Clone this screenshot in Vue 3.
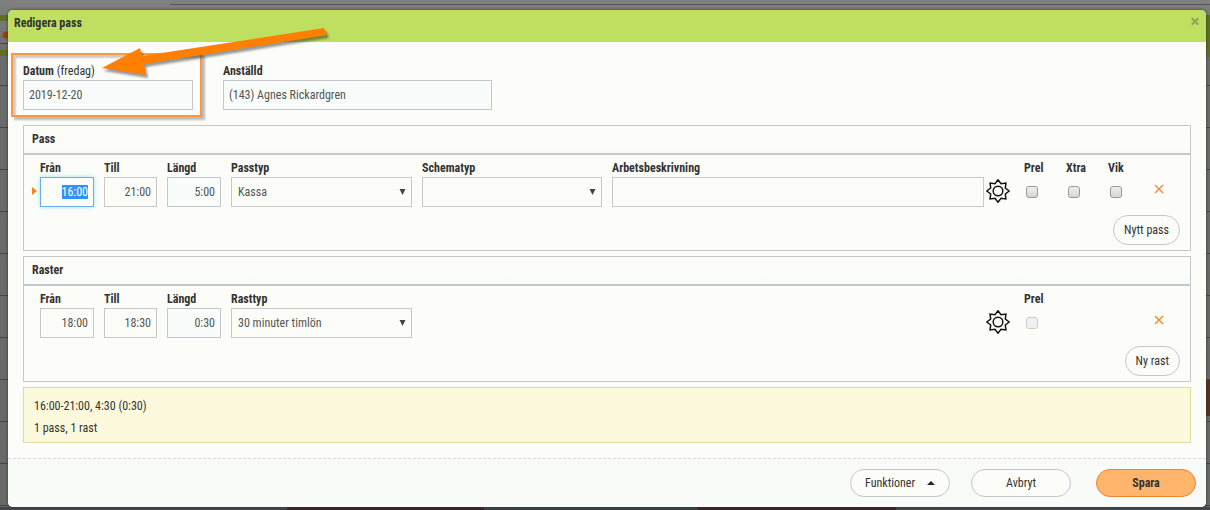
<script setup>
import { onMounted, reactive, ref } from 'vue'

const firstTime = ref(null)
const form = reactive({
  date: '2019-12-20',
  employee: '(143) Agnes Rickardgren',
  shift: { from: '16:00', to: '21:00', length: '5:00', type: 'Kassa', schema: '', note: '' },
  pause: { from: '18:00', to: '18:30', length: '0:30', type: '30 minuter timlön' }
})
const flags = reactive([
  { id: 'prel', label: 'Prel', on: false },
  { id: 'xtra', label: 'Xtra', on: false },
  { id: 'vik', label: 'Vik', on: false }
])
const star = Array.from({ length: 16 }, (_, i) => {
  const r = i % 2 ? 7.9 : 11.2
  const a = (i * Math.PI) / 8
  return `${(12 + r * Math.sin(a)).toFixed(2)},${(12 - r * Math.cos(a)).toFixed(2)}`
}).join(' ')

onMounted(() => {
  firstTime.value.focus()
  firstTime.value.select()
})
</script>

<template>
  <div class="page">
    <form class="modal" @submit.prevent>
      <header class="title">
        <h1>Redigera pass</h1>
        <button type="button" class="close" aria-label="Stäng">×</button>
      </header>

      <main class="body">
        <div class="top">
          <div class="field date">
            <label for="date">Datum <span>(fredag)</span></label>
            <input id="date" v-model="form.date" class="tint" type="text" />
            <div class="marker"></div>
          </div>
          <div class="field employee">
            <label for="employee">Anställd</label>
            <input id="employee" v-model="form.employee" class="tint" type="text" readonly />
          </div>
          <svg class="arrow" viewBox="0 0 240 60" aria-hidden="true">
            <path d="M9 47 L47 27 L49 35 L231 7 L234 14 L51 43 L53 54 Z" fill="#ff8000" />
          </svg>
        </div>

        <section class="panel">
          <h2>Pass</h2>
          <div class="row">
            <svg class="current" viewBox="0 0 5 8" aria-hidden="true"><path d="M0 0 L5 4 L0 8 Z" fill="#f58220" /></svg>
            <div class="fields">
              <div class="field">
                <label for="s-from">Från</label>
                <input id="s-from" ref="firstTime" v-model="form.shift.from" class="time" type="text" />
              </div>
              <div class="field">
                <label for="s-to">Till</label>
                <input id="s-to" v-model="form.shift.to" class="time" type="text" />
              </div>
              <div class="field">
                <label for="s-len">Längd</label>
                <input id="s-len" v-model="form.shift.length" class="time tint" type="text" readonly />
              </div>
              <div class="field">
                <label for="s-type">Passtyp</label>
                <div class="select">
                  <select id="s-type" v-model="form.shift.type"><option>Kassa</option></select>
                  <svg viewBox="0 0 7 6" aria-hidden="true"><path d="M0.5 0H6.5L3.5 6Z" fill="#444" /></svg>
                </div>
              </div>
              <div class="field">
                <label for="s-schema">Schematyp</label>
                <div class="select">
                  <select id="s-schema" v-model="form.shift.schema"><option></option></select>
                  <svg viewBox="0 0 7 6" aria-hidden="true"><path d="M0.5 0H6.5L3.5 6Z" fill="#444" /></svg>
                </div>
              </div>
              <div class="field">
                <label for="s-note">Arbetsbeskrivning</label>
                <input id="s-note" v-model="form.shift.note" type="text" />
              </div>
            </div>
            <div class="tools">
              <button type="button" class="icon gear" aria-label="Inställningar">
                <svg viewBox="0 0 24 24" fill="none" stroke="#111" stroke-width="1.5">
                  <polygon :points="star" /><circle cx="12" cy="12" r="4.8" />
                </svg>
              </button>
              <div v-for="f in flags" :key="f.id" class="flag">
                <label :for="f.id">{{ f.label }}</label>
                <input :id="f.id" v-model="f.on" type="checkbox" />
              </div>
              <button type="button" class="icon remove" aria-label="Ta bort pass">
                <svg viewBox="0 0 10 10" stroke="#f58245" stroke-width="1.3"><path d="M1 1L9 9M9 1L1 9" /></svg>
              </button>
            </div>
          </div>
          <div class="add"><button type="button" class="pill">Nytt pass</button></div>
        </section>

        <section class="panel">
          <h2>Raster</h2>
          <div class="row">
            <div class="fields">
              <div class="field">
                <label for="p-from">Från</label>
                <input id="p-from" v-model="form.pause.from" class="time" type="text" />
              </div>
              <div class="field">
                <label for="p-to">Till</label>
                <input id="p-to" v-model="form.pause.to" class="time" type="text" />
              </div>
              <div class="field">
                <label for="p-len">Längd</label>
                <input id="p-len" v-model="form.pause.length" class="time tint" type="text" readonly />
              </div>
              <div class="field">
                <label for="p-type">Rasttyp</label>
                <div class="select">
                  <select id="p-type" v-model="form.pause.type"><option>30 minuter timlön</option></select>
                  <svg viewBox="0 0 7 6" aria-hidden="true"><path d="M0.5 0H6.5L3.5 6Z" fill="#444" /></svg>
                </div>
              </div>
            </div>
            <div class="tools">
              <button type="button" class="icon gear" aria-label="Inställningar">
                <svg viewBox="0 0 24 24" fill="none" stroke="#111" stroke-width="1.5">
                  <polygon :points="star" /><circle cx="12" cy="12" r="4.8" />
                </svg>
              </button>
              <div class="flag">
                <label for="p-prel">Prel</label>
                <input id="p-prel" type="checkbox" disabled />
              </div>
              <button type="button" class="icon remove" aria-label="Ta bort rast">
                <svg viewBox="0 0 10 10" stroke="#f58220" stroke-width="1.3"><path d="M1 1L9 9M9 1L1 9" /></svg>
              </button>
            </div>
          </div>
          <div class="add"><button type="button" class="pill">Ny rast</button></div>
        </section>

        <div class="summary">
          <p>16:00-21:00, 4:30 (0:30)</p>
          <p>1 pass, 1 rast</p>
        </div>
      </main>

      <footer class="actions">
        <button type="button" class="pill menu">
          Funktioner
          <svg viewBox="0 0 8 4" aria-hidden="true"><path d="M0 4L4 0L8 4Z" fill="#222" /></svg>
        </button>
        <button type="button" class="pill">Avbryt</button>
        <button type="submit" class="pill save">Spara</button>
      </footer>
    </form>
  </div>
</template>

<style>
body {
  background: #686868;
}
</style>

<style scoped>
* {
  box-sizing: border-box;
}
.page {
  min-height: 100vh;
  padding: 10px 4px 3px 8px;
  font: 12px/18px "Roboto Condensed", "Liberation Sans Narrow", Roboto, "Liberation Sans", sans-serif;
  color: #333;
  background:
    linear-gradient(#5b2f1d, #5b2f1d) 100% 380px / 4px 36px no-repeat,
    linear-gradient(90deg, #45474a 0 287px, #3c2728 287px 484px, #3c4346 484px 698px, #3c2728 698px 896px, #45474a 896px) 0 100% / 100% 3px no-repeat,
    linear-gradient(#5f7024, #5f7024) 0 15px / 8px 6px no-repeat,
    linear-gradient(#5f7024, #5f7024) 0 50px / 8px 6px no-repeat,
    linear-gradient(#5f7024, #5f7024) 100% 15px / 4px 42px no-repeat,
    radial-gradient(circle at 6px 35px, #96400c 0 3px, transparent 4px) no-repeat,
    linear-gradient(90deg, transparent 0 170px, #555 170px) 0 4px / 100% 1px no-repeat,
    repeating-linear-gradient(transparent 0 41px, #454545 41px 42px) 0 2px,
    linear-gradient(#808080, #6b6b6b 60px, #686868);
}
.modal {
  overflow: hidden;
  border-radius: 5px;
  background: #fcfdf9;
  box-shadow: 0 0 3px #333;
}
.title {
  display: flex;
  align-items: flex-start;
  justify-content: space-between;
  height: 32px;
  padding: 0 6px;
  background: #bfdf60;
}
h1,
h2 {
  margin: 0;
  font-size: 12px;
  line-height: 27px;
  font-weight: 700;
}
.close {
  width: 10px;
  height: 22px;
  padding: 0;
  border: 0;
  background: none;
  color: #8ea653;
  font: 700 17px/22px Roboto, sans-serif;
}
.body {
  padding: 20px 15px 15px;
}
.top {
  position: relative;
  display: flex;
  gap: 30px;
  margin-bottom: 15px;
}
.field {
  min-width: 0;
}
.date {
  position: relative;
  width: 170px;
}
.employee {
  width: 269px;
}
.marker {
  position: absolute;
  inset: -9px -9px -7px -12px;
  border: 2px solid #ff9838;
  box-shadow: 3px 3px 2px #bbb, inset 3px 3px 2px #ccc;
  pointer-events: none;
}
.arrow {
  position: absolute;
  left: 70px;
  top: -41px;
  width: 240px;
  height: 60px;
  filter: drop-shadow(2px 3px 1px #0006);
  pointer-events: none;
}
label {
  display: block;
  height: 18px;
  font-weight: 700;
  white-space: nowrap;
}
label span {
  font-weight: 400;
}
input[type='text'],
select {
  display: block;
  width: 100%;
  height: 30px;
  margin: 0;
  padding: 0 5px;
  border: 1px solid #c8c8c8;
  border-radius: 0;
  outline: 0;
  background: #fcfdf9;
  color: #555;
  font: inherit;
}
input[type='text'].tint {
  border-color: #c8c5ce;
  background: #f8fcfa;
}
input.time {
  text-align: right;
}
input[type='text']:not([readonly]):focus {
  border-color: #66afe9;
  box-shadow: 0 0 5px #a5e3f5;
}
input::selection {
  background: #3390ff;
  color: #fff;
}
select {
  padding: 0 6px;
  appearance: none;
}
.select {
  position: relative;
}
.select svg {
  position: absolute;
  right: 6px;
  top: 12px;
  width: 7px;
  height: 6px;
  pointer-events: none;
}
.panel {
  margin-bottom: 5px;
  border: 1px solid #c8c8c8;
}
h2 {
  padding-left: 8px;
  border-bottom: 2px solid #c8c8c8;
  background: linear-gradient(#fcfdf9 50%, #f7fcfa);
}
.row {
  position: relative;
  display: flex;
  padding: 4px 10px 8px 16px;
}
.current {
  position: absolute;
  left: 8px;
  top: 32px;
  width: 5px;
  height: 8px;
}
.fields {
  flex: 1;
  display: grid;
  grid-template-columns: 54px 53px 54px 181px 180px minmax(60px, 1fr);
  gap: 10px;
}
.tools {
  display: grid;
  grid-template-columns: 28px repeat(4, 42px);
}
.icon {
  display: flex;
  justify-content: center;
  padding: 0;
  border: 0;
  background: none;
}
.gear {
  padding-top: 20px;
}
.gear svg {
  width: 24px;
  height: 24px;
}
.remove {
  grid-column: 5;
  padding-top: 25px;
}
.remove svg {
  width: 10px;
  height: 10px;
}
.flag {
  padding-left: 12px;
}
input[type='checkbox'] {
  display: block;
  width: 12px;
  height: 12px;
  margin: 9px 0 0 2px;
  border: 1px solid #999;
  border-radius: 3px;
  appearance: none;
  background: linear-gradient(#eee, #d6d6d6);
}
input[type='checkbox']:disabled {
  border-color: #ccc;
  background: #f1eff1;
}
.add {
  display: flex;
  justify-content: flex-end;
  padding: 0 10px 5px;
}
.pill {
  height: 30px;
  padding: 0 10px;
  border: 1px solid #c8c5ca;
  border-radius: 15px;
  background: #fcfdf9;
  color: #333;
  font: inherit;
}
.summary {
  padding: 7px 10px 3px;
  border: 1px solid #dedc9c;
  background: #fcf9dd;
}
.summary p {
  margin: 0;
  line-height: 22px;
}
.actions {
  display: flex;
  justify-content: flex-end;
  gap: 21px;
  padding: 10px;
  border-top: 1px dashed #ddd8ec;
  background: #f8fbf8;
}
.actions .pill {
  width: 100px;
  height: 28px;
}
.menu {
  display: flex;
  align-items: center;
  justify-content: space-between;
}
.actions .menu {
  padding: 0 14px;
}
.menu svg {
  width: 8px;
  height: 4px;
}
.actions .save {
  margin-left: 4px;
  border-color: #ee8530;
  background: #ffb56b;
  font-weight: 700;
}
</style>
